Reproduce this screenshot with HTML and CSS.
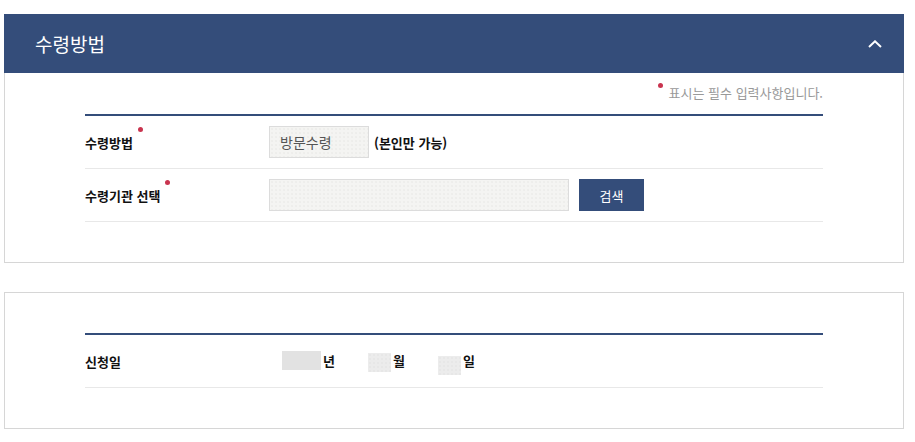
FILE: index.html
```html
<!DOCTYPE html>
<html lang="ko">
<head>
  <meta charset="utf-8">
  <title>수령방법</title>
  <link rel="stylesheet" href="styles.css">
</head>
<body>
  <div class="wrap">
    <section class="panel">
      <div class="panel-head">
        <h2>수령방법</h2>
        <svg class="toggle" viewBox="0 0 14 8" width="14" height="8">
          <path d="M1 7L7 1.3L13 7" fill="none" stroke="white" stroke-width="2"/>
        </svg>
      </div>
      <div class="panel-body">
        <p class="notice"><span class="dot"></span>표시는 필수 입력사항입니다.</p>
        <div class="form-table">
          <div class="row">
            <div class="label req">수령방법</div>
            <div class="field">
              <div class="input small">방문수령</div>
              <span class="hint">(본인만 가능)</span>
            </div>
          </div>
          <div class="row">
            <div class="label req">수령기관 선택</div>
            <div class="field">
              <div class="input wide"></div>
              <button class="btn">검색</button>
            </div>
          </div>
        </div>
      </div>
    </section>

    <section class="panel">
      <div class="panel-body plain">
        <div class="form-table">
          <div class="row">
            <div class="label">신청일</div>
            <div class="field date">
              <span class="sel year"></span><span class="unit">년</span>
              <span class="sel month"></span><span class="unit">월</span>
              <span class="sel day"></span><span class="unit">일</span>
            </div>
          </div>
        </div>
      </div>
    </section>
  </div>
</body>
</html>
```

FILE: styles.css
```css
* {
  box-sizing: border-box;
}
body {
  margin: 0;
  padding: 14px 0 0 4px;
  font-family: "Noto Sans CJK KR", "Noto Sans", sans-serif;
  color: #111;
  background: #fff;
}
.wrap {
  width: 900px;
}
.panel {
  margin-bottom: 29px;
}
.panel-head {
  height: 59px;
  background-color: #344d7a;
  display: flex;
  align-items: center;
  justify-content: space-between;
  padding: 0 22px 0 31px;
}
.panel-head h2 {
  margin: 0;
  font-size: 19px;
  font-weight: normal;
  color: #fff;
}
.toggle {
  display: block;
}
.panel-body {
  border: 1px solid #d6d6d6;
  border-top: none;
  padding: 10px 80px 40px;
}
.panel-body.plain {
  border-top: 1px solid #d6d6d6;
  padding-top: 40px;
}
.notice {
  margin: 0 0 11px;
  height: 20px;
  line-height: 20px;
  text-align: right;
  font-size: 13px;
  color: #999;
}
.dot {
  display: inline-block;
  width: 5px;
  height: 5px;
  border-radius: 50%;
  background-color: #c9344f;
  vertical-align: top;
  margin: 0 6px 0 0;
}
.form-table {
  border-top: 2px solid #344d7a;
}
.row {
  display: flex;
  align-items: center;
  height: 53px;
  border-bottom: 1px solid #e8e8e8;
}
.label {
  width: 184px;
  font-size: 13px;
  font-weight: bold;
  color: #111;
}
.label.req::after {
  content: "";
  display: inline-block;
  width: 5px;
  height: 5px;
  border-radius: 50%;
  background-color: #c9344f;
  margin-left: 5px;
  vertical-align: top;
  position: relative;
  top: -6px;
}
.field {
  display: flex;
  align-items: center;
}
.input {
  height: 32px;
  border: 1px solid #dcdcdc;
  background-color: #f4f4f2;
  background-image: radial-gradient(#e6e6e3 0.6px, transparent 0.8px);
  background-size: 4px 4px;
  font-size: 14px;
  color: #555;
  line-height: 30px;
  padding: 0 10px;
}
.input.small {
  width: 100px;
}
.input.wide {
  width: 300px;
}
.hint {
  margin-left: 5px;
  font-size: 13px;
  font-weight: bold;
}
.btn {
  margin-left: 10px;
  width: 65px;
  height: 32px;
  border: none;
  background-color: #344d7a;
  color: #fff;
  font-family: inherit;
  font-size: 13px;
  padding: 0;
}
.date {
  padding-left: 13px;
  align-items: flex-start;
  height: 40px;
}
.sel {
  display: block;
  height: 19px;
  background-color: #ececec;
  background-image: radial-gradient(#e0e0e0 0.6px, transparent 0.8px);
  background-size: 4px 4px;
}
.sel.year {
  width: 39px;
  margin-top: 10px;
  background-color: #e6e6e6;
  background-image: linear-gradient(to right, #e2e2e2 23px, #ededed 23px);
}
.sel.month {
  width: 23px;
  margin-top: 12px;
  margin-left: 33px;
}
.sel.day {
  width: 23px;
  margin-top: 15px;
  margin-left: 33px;
}
.unit {
  margin-left: 2px;
  margin-top: 10px;
  font-size: 13px;
  font-weight: bold;
  line-height: 20px;
}
```
